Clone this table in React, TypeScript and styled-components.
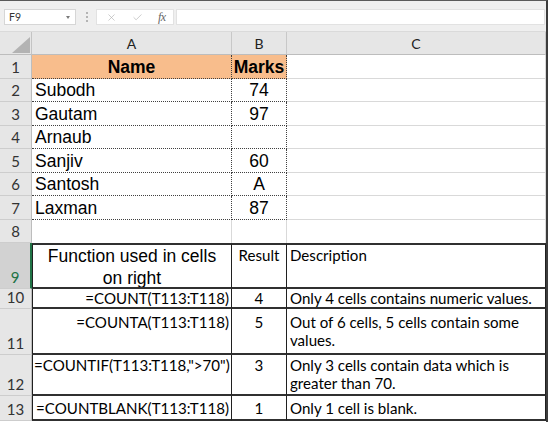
import React from 'react';
import styled, { createGlobalStyle } from 'styled-components';
import { X, Check } from 'lucide-react';

const GlobalStyle = createGlobalStyle`
  html, body { margin: 0; padding: 0; background: #fff; }
  body { font-family: "Liberation Sans", Arial, sans-serif; }
`;

const Frame = styled.div`
  width: 548px;
  height: 422px;
  box-sizing: border-box;
  border-top: 1px solid #5a5a5a;
  border-right: 2px solid #3c3c3c;
  overflow: hidden;
  background: #fff;
  display: flex;
  flex-direction: column;
`;

const FormulaBar = styled.div`
  height: 31px;
  flex: none;
  box-sizing: border-box;
  background: #efefef;
  display: flex;
  align-items: center;
  padding: 2px 1px 0 4px;
  border-bottom: 1px solid #dadada;
`;

const NameBox = styled.div`
  width: 72px;
  height: 16px;
  box-sizing: border-box;
  background: #fff;
  border: 1px solid #d6d6d6;
  display: flex;
  align-items: center;
  justify-content: space-between;
  padding: 0 5px 0 4px;
  font: 400 10.5px/1 Lato, "Noto Sans", sans-serif;
  color: #333;
`;

const Caret = styled.span`
  width: 0;
  height: 0;
  border-left: 2.5px solid transparent;
  border-right: 2.5px solid transparent;
  border-top: 3px solid #7a7a7a;
`;

const Grip = styled.div`
  margin: 0 8px 0 10px;
  display: flex;
  flex-direction: column;
  gap: 2px;
`;

const GripDot = styled.span`
  width: 2px;
  height: 2px;
  background: #b4b4b4;
`;

const FxBox = styled.div`
  width: 78px;
  height: 16px;
  box-sizing: border-box;
  background: #fff;
  border: 1px solid #e2e2e2;
  display: flex;
  align-items: center;
  padding: 0 0 0 9px;
  gap: 15px;
  color: #b0b0b0;
`;

const Fx = styled.span`
  font: italic 400 12px/1 "Liberation Serif", serif;
  color: #666;
  letter-spacing: -0.5px;
`;

const FormulaInput = styled.div`
  flex: 1;
  height: 16px;
  margin-left: 2px;
  box-sizing: border-box;
  background: #fff;
  border: 1px solid #e2e2e2;
`;

const Sheet = styled.div`
  display: grid;
  grid-template-columns: 32px 200px 55px 259px;
  grid-template-rows: 23px repeat(8, 23.5px) 46px 20px 46px 41px 25px;
`;

const Corner = styled.div`
  box-sizing: border-box;
  background: #e6e6e6;
  border-right: 1px solid #c4c4c4;
  border-bottom: 1px solid #bdbdbd;
  display: flex;
  align-items: flex-end;
  justify-content: flex-end;
  padding: 0 1px 1px 0;
`;

const ColHead = styled.div`
  box-sizing: border-box;
  background: #e6e6e6;
  border-right: 1px solid #c8c8c8;
  border-bottom: 1px solid #bdbdbd;
  display: flex;
  align-items: center;
  justify-content: center;
  padding-top: 2px;
  font: 400 14px/1 Lato, "Noto Sans", sans-serif;
  color: #222;
`;

const RowHead = styled.div<{ $active?: boolean }>`
  box-sizing: border-box;
  background: ${(p) => (p.$active ? '#d2d2d2' : '#e6e6e6')};
  border-right: ${(p) => (p.$active ? '2px solid #217346' : '1px solid #bdbdbd')};
  border-bottom: 1px solid #cdcdcd;
  display: flex;
  align-items: flex-end;
  justify-content: center;
  padding-bottom: 1px;
  font: 400 15px/20px Lato, "Noto Sans", sans-serif;
  color: ${(p) => (p.$active ? '#217346' : '#333')};
`;

const DataCell = styled.div<{
  $fill?: boolean;
  $bold?: boolean;
  $center?: boolean;
  $dotRight?: boolean;
  $dotBottom?: boolean;
  $open?: boolean;
}>`
  box-sizing: border-box;
  min-width: 0;
  display: flex;
  align-items: flex-end;
  justify-content: ${(p) => (p.$center ? 'center' : 'flex-start')};
  padding: 0 3px 1px;
  font: ${(p) => (p.$bold ? 700 : 400)} 17.5px/19px "Liberation Sans", Arial, sans-serif;
  color: #000;
  white-space: nowrap;
  overflow: hidden;
  background: ${(p) => (p.$fill ? '#f8bd8c' : '#fff')};
  border-right: 1px ${(p) => (p.$dotRight ? 'dotted #404040' : 'solid #d9d9d9')};
  border-bottom: ${(p) =>
    p.$open ? 'none' : p.$dotBottom ? '1px dotted #404040' : '1px solid #d9d9d9'};
`;

type Align = 'left' | 'center' | 'right';
type VAlign = 'top' | 'bottom';

const TableCell = styled.div<{
  $first?: boolean;
  $lead?: boolean;
  $align?: Align;
  $valign?: VAlign;
  $arial?: boolean;
  $formula?: boolean;
  $pt?: number;
  $pb?: number;
}>`
  box-sizing: border-box;
  min-width: 0;
  display: flex;
  flex-direction: column;
  justify-content: ${(p) => (p.$valign === 'bottom' ? 'flex-end' : 'flex-start')};
  text-align: ${(p) => p.$align || 'left'};
  padding: ${(p) => p.$pt ?? 0}px ${(p) => (p.$formula ? 2 : 3)}px ${(p) => p.$pb ?? 0}px
    ${(p) => (p.$formula ? 1 : 3)}px;
  white-space: ${(p) => (p.$formula ? 'nowrap' : 'normal')};
  font: ${(p) =>
    p.$arial
      ? '400 17.5px/22px "Liberation Sans", Arial, sans-serif'
      : '400 15.1px/17.5px Lato, "Noto Sans", sans-serif'};
  color: #000;
  background: #fff;
  border-top: ${(p) => (p.$first ? '2px solid #303030' : 'none')};
  border-left: ${(p) => (p.$lead ? '1px solid #202020' : 'none')};
  border-right: 1px solid #202020;
  border-bottom: 2px solid #303030;
  overflow: hidden;
`;

const people: [string, string][] = [
  ['Subodh', '74'],
  ['Gautam', '97'],
  ['Arnaub', ''],
  ['Sanjiv', '60'],
  ['Santosh', 'A'],
  ['Laxman', '87'],
];

type TRow = {
  n: number;
  f: string;
  r: string;
  d: string;
  valign: VAlign;
  pt?: number;
  pb?: number;
};

const tableRows: TRow[] = [
  { n: 10, f: '=COUNT(T113:T118)', r: '4', d: 'Only 4 cells contains numeric values.', valign: 'bottom', pb: 0 },
  { n: 11, f: '=COUNTA(T113:T118)', r: '5', d: 'Out of 6 cells, 5 cells contain some values.', valign: 'top', pt: 5 },
  { n: 12, f: '=COUNTIF(T113:T118,">70")', r: '3', d: 'Only 3 cells contain data which is greater than 70.', valign: 'top', pt: 2 },
  { n: 13, f: '=COUNTBLANK(T113:T118)', r: '1', d: 'Only 1 cell is blank.', valign: 'bottom', pb: 2 },
];

export default function App() {
  return (
    <>
      <GlobalStyle />
      <Frame>
        <FormulaBar>
          <NameBox>
            <span>F9</span>
            <Caret />
          </NameBox>
          <Grip>
            <GripDot />
            <GripDot />
            <GripDot />
          </Grip>
          <FxBox>
            <X size={11} strokeWidth={1.4} />
            <Check size={11} strokeWidth={1.4} />
            <Fx>fx</Fx>
          </FxBox>
          <FormulaInput />
        </FormulaBar>
        <Sheet>
          <Corner>
            <svg width="18" height="16" viewBox="0 0 18 16">
              <polygon points="18,0 18,16 0,16" fill="#b3b3b3" />
            </svg>
          </Corner>
          <ColHead>A</ColHead>
          <ColHead>B</ColHead>
          <ColHead>C</ColHead>

          <RowHead>1</RowHead>
          <DataCell $fill $bold $center $dotRight $dotBottom>Name</DataCell>
          <DataCell $fill $bold $center $dotRight $dotBottom>Marks</DataCell>
          <DataCell />

          {people.map(([name, mark], i) => (
            <React.Fragment key={name}>
              <RowHead>{i + 2}</RowHead>
              <DataCell $dotRight $dotBottom>{name}</DataCell>
              <DataCell $center $dotRight $dotBottom>{mark}</DataCell>
              <DataCell />
            </React.Fragment>
          ))}

          <RowHead>8</RowHead>
          <DataCell $open />
          <DataCell $open />
          <DataCell $open />

          <RowHead $active>9</RowHead>
          <TableCell $first $lead $arial $align="center">
            Function used in cells on right
          </TableCell>
          <TableCell $first $align="center" $pt={2}>Result</TableCell>
          <TableCell $first $pt={2}>Description</TableCell>

          {tableRows.map((row) => (
            <React.Fragment key={row.n}>
              <RowHead>{row.n}</RowHead>
              <TableCell $lead $formula $align="right" $valign={row.valign} $pt={row.pt} $pb={row.pb}>
                {row.f}
              </TableCell>
              <TableCell $align="center" $valign={row.valign} $pt={row.pt} $pb={row.pb}>
                {row.r}
              </TableCell>
              <TableCell $valign={row.valign} $pt={row.pt} $pb={row.pb}>
                {row.d}
              </TableCell>
            </React.Fragment>
          ))}
        </Sheet>
      </Frame>
    </>
  );
}
